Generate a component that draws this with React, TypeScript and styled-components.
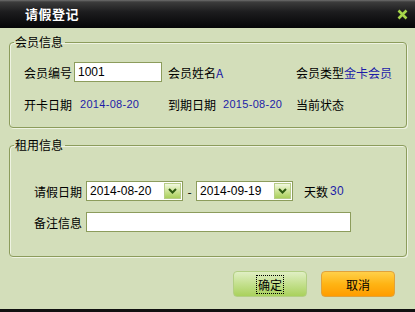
import { FC } from "react";
import styled, { createGlobalStyle } from "styled-components";

const GlobalStyle = createGlobalStyle`
  html, body {
    margin: 0;
    padding: 0;
    background: #d3deba;
  }
  body {
    font-family: "Noto Sans CJK SC", "Liberation Sans", sans-serif;
    font-size: 12px;
    color: #000;
  }
`;

const Dialog = styled.div`
  width: 415px;
  height: 312px;
  box-sizing: border-box;
  display: flex;
  flex-direction: column;
  background: #d3deba;
  border-bottom: 3px solid #111;
`;

const TitleBar = styled.div`
  height: 28px;
  flex: none;
  display: flex;
  align-items: center;
  justify-content: space-between;
  padding: 0 6px 0 25px;
  background: linear-gradient(#6e6e6e 0, #3c3c3c 2px, #1c1c1e 12px, #050507 100%);
`;

const Title = styled.span`
  color: #fff;
  font-size: 13px;
  font-weight: bold;
  letter-spacing: 0.5px;
  line-height: 28px;
`;

const Close = styled.span`
  display: flex;
  width: 14px;
  height: 14px;
  align-items: center;
  justify-content: center;
`;

const Body = styled.div`
  flex: 1;
  display: flex;
  flex-direction: column;
  padding: 6px 8px 0 9px;
`;

const Group = styled.fieldset<{ $h: number }>`
  margin: 0;
  height: ${(p) => p.$h}px;
  box-sizing: border-box;
  border: 1px solid #8c9c5c;
  border-radius: 4px;
  padding: 0;
  box-shadow: inset 1px 1px 0 #eef3e2, 1px 1px 0 #eef3e2;
  & + & {
    margin-top: 9px;
  }
`;

const Legend = styled.legend`
  padding: 0 2px 0 1px;
  margin-left: 4px;
  font-size: 12px;
  line-height: 16px;
  color: #000;
`;

const InfoGrid = styled.div`
  display: grid;
  grid-template-columns: 144px 128px 1fr;
  grid-template-rows: 20px 20px;
  row-gap: 12px;
  align-items: center;
  padding: 12px 0 0 14px;
`;

const Field = styled.div`
  display: flex;
  align-items: center;
  white-space: nowrap;
`;

const Label = styled.span<{ $gap?: number; $lead?: number }>`
  margin-left: ${(p) => p.$lead ?? 0}px;
  margin-right: ${(p) => p.$gap ?? 0}px;
`;

const Value = styled.span`
  color: #1c1ca8;
`;

const DateValue = styled.span<{ $size?: number }>`
  color: #1c1ca8;
  font-family: "Liberation Sans", Arial, sans-serif;
  font-size: ${(p) => p.$size ?? 11}px;
  letter-spacing: 0.3px;
`;

const TextBox = styled.div<{ $w: number }>`
  width: ${(p) => p.$w}px;
  height: 20px;
  box-sizing: border-box;
  background: #fff;
  border: 1px solid #8c9c5c;
  padding: 0 3px;
  line-height: 18px;
  font-family: "Liberation Sans", Arial, sans-serif;
  font-size: 12px;
`;

const RentRows = styled.div`
  display: flex;
  flex-direction: column;
  gap: 11px;
  padding: 28px 0 0 24px;
`;

const Combo = styled.div`
  width: 97px;
  height: 20px;
  box-sizing: border-box;
  display: flex;
  background: #fff;
  border: 1px solid #8c9c5c;
  font-family: "Liberation Sans", Arial, sans-serif;
  font-size: 12px;
`;

const ComboText = styled.span`
  flex: 1;
  line-height: 18px;
  padding-left: 3px;
`;

const ComboButton = styled.span`
  width: 17px;
  margin: 1px;
  display: flex;
  align-items: center;
  justify-content: center;
  border: 1px solid #b7cd86;
  box-sizing: border-box;
  background: linear-gradient(#f1f8de, #c6e08a 60%, #a9cf5c);
`;

const Dash = styled.span`
  width: 13px;
  text-align: center;
`;

const Footer = styled.div`
  flex: 1;
  display: flex;
  justify-content: flex-end;
  align-items: flex-start;
  gap: 14px;
  padding: 14px 12px 0 0;
`;

const Button = styled.button<{ $kind: "ok" | "cancel" }>`
  width: 74px;
  height: 26px;
  border-radius: 4px;
  font-family: "Noto Sans CJK SC", sans-serif;
  font-size: 12px;
  color: #000;
  padding: 0;
  display: flex;
  align-items: center;
  justify-content: center;
  border: 1px solid ${(p) => (p.$kind === "ok" ? "#b3cf84" : "#e0a23c")};
  background: ${(p) =>
    p.$kind === "ok"
      ? "linear-gradient(#e0efc4, #c4e08e 50%, #a9d15c)"
      : "linear-gradient(#ffd04a, #ffb414 50%, #ff9c00)"};
`;

const Focus = styled.span`
  border: 1px dotted #000;
  padding: 0 1px;
  line-height: 17px;
`;

const Chevron: FC = () => (
  <svg width="9" height="6" viewBox="0 0 9 6">
    <path d="M1 1 L4.5 4.5 L8 1" fill="none" stroke="#2e5a12" strokeWidth="2" />
  </svg>
);

const LeaveDialog: FC = () => {
  return (
    <Dialog>
      <GlobalStyle />
      <TitleBar>
        <Title>请假登记</Title>
        <Close>
          <svg width="11" height="11" viewBox="0 0 11 11">
            <path d="M1.5 1.5 L9.5 9.5 M9.5 1.5 L1.5 9.5" stroke="#a6d64a" strokeWidth="2.6" />
          </svg>
        </Close>
      </TitleBar>
      <Body>
        <Group $h={94}>
          <Legend>会员信息</Legend>
          <InfoGrid>
            <Field>
              <Label $gap={2}>会员编号</Label>
              <TextBox $w={88}>1001</TextBox>
            </Field>
            <Field>
              <Label>会员姓名</Label>
              <Value>A</Value>
            </Field>
            <Field>
              <Label>会员类型</Label>
              <Value>金卡会员</Value>
            </Field>
            <Field>
              <Label $gap={8}>开卡日期</Label>
              <DateValue>2014-08-20</DateValue>
            </Field>
            <Field>
              <Label $gap={7}>到期日期</Label>
              <DateValue>2015-08-20</DateValue>
            </Field>
            <Field>
              <Label>当前状态</Label>
            </Field>
          </InfoGrid>
        </Group>
        <Group $h={120}>
          <Legend>租用信息</Legend>
          <RentRows>
            <Field>
              <Label $gap={4}>请假日期</Label>
              <Combo>
                <ComboText>2014-08-20</ComboText>
                <ComboButton>
                  <Chevron />
                </ComboButton>
              </Combo>
              <Dash>-</Dash>
              <Combo>
                <ComboText>2014-09-19</ComboText>
                <ComboButton>
                  <Chevron />
                </ComboButton>
              </Combo>
              <Label $lead={11} $gap={2}>天数</Label>
              <DateValue $size={12}>30</DateValue>
            </Field>
            <Field>
              <Label $gap={4}>备注信息</Label>
              <TextBox $w={265} />
            </Field>
          </RentRows>
        </Group>
        <Footer>
          <Button $kind="ok">
            <Focus>确定</Focus>
          </Button>
          <Button $kind="cancel">取消</Button>
        </Footer>
      </Body>
    </Dialog>
  );
};

export default LeaveDialog;
